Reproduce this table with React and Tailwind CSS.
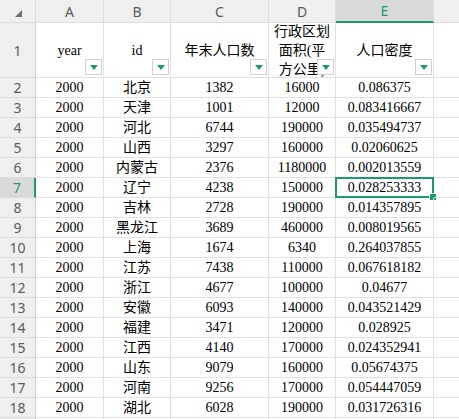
import React from 'react';

const rows = [
  ['2000', '北京', '1382', '16000', '0.086375'],
  ['2000', '天津', '1001', '12000', '0.083416667'],
  ['2000', '河北', '6744', '190000', '0.035494737'],
  ['2000', '山西', '3297', '160000', '0.02060625'],
  ['2000', '内蒙古', '2376', '1180000', '0.002013559'],
  ['2000', '辽宁', '4238', '150000', '0.028253333'],
  ['2000', '吉林', '2728', '190000', '0.014357895'],
  ['2000', '黑龙江', '3689', '460000', '0.008019565'],
  ['2000', '上海', '1674', '6340', '0.264037855'],
  ['2000', '江苏', '7438', '110000', '0.067618182'],
  ['2000', '浙江', '4677', '100000', '0.04677'],
  ['2000', '安徽', '6093', '140000', '0.043521429'],
  ['2000', '福建', '3471', '120000', '0.028925'],
  ['2000', '江西', '4140', '170000', '0.024352941'],
  ['2000', '山东', '9079', '160000', '0.05674375'],
  ['2000', '河南', '9256', '170000', '0.054447059'],
  ['2000', '湖北', '6028', '190000', '0.031726316'],
];

const cellFont = { fontFamily: '"Liberation Serif", "Noto Sans CJK SC", serif' };
const uiFont = { fontFamily: '"Noto Sans", "Liberation Sans", sans-serif' };

// little filter dropdown in header cells
function FilterBtn() {
  return (
    <div className="absolute right-[1px] bottom-[2px] w-[17px] h-[16px] border border-[#d0d0d0] bg-white flex items-center justify-center">
      <div className="w-0 h-0 border-l-[4px] border-r-[4px] border-t-[5px] border-l-transparent border-r-transparent border-t-[#1b9b6b] mt-[1px]" />
    </div>
  );
}

function ColHead({ label, active }) {
  return (
    <div
      className={
        'flex items-center justify-center border-r border-[#dcdcdc] text-[14px] ' +
        (active ? 'bg-[#d9d9d9] text-[#1b9b6b] border-b-2 border-b-[#1b9b6b]' : 'bg-[#efefef] text-[#5a5a5a] border-b border-b-[#dcdcdc]')
      }
      style={uiFont}
    >
      {label}
    </div>
  );
}

function RowHead({ n, active }) {
  return (
    <div
      className={
        'flex items-center justify-center border-b border-[#dcdcdc] text-[14px] ' +
        (active ? 'bg-[#d9d9d9] text-[#1b9b6b] border-r-2 border-r-[#1b9b6b]' : 'bg-[#efefef] text-[#5a5a5a] border-r border-r-[#d0d0d0]')
      }
      style={uiFont}
    >
      {n}
    </div>
  );
}

function Cell({ children, selected }) {
  return (
    <div
      className="relative flex items-center justify-center border-r border-b border-[#e1e1e1] text-[14px] text-black whitespace-nowrap"
      style={cellFont}
    >
      {children}
      {selected && (
        <div className="absolute -left-[1px] -top-[1px] -right-[1px] -bottom-[1px] border-2 border-[#1b9b6b]">
          <div className="absolute -right-[4px] -bottom-[4px] w-[6px] h-[6px] bg-[#1b9b6b] outline outline-1 outline-white" />
        </div>
      )}
    </div>
  );
}

function HeadCell({ children, wrap }) {
  return (
    <div
      className="relative flex items-center justify-center border-r border-b border-[#e1e1e1] text-[14px] text-black overflow-hidden bg-white"
      style={cellFont}
    >
      <div className={wrap ? 'px-[4px] text-center leading-[19px] break-all' : 'whitespace-nowrap'}>{children}</div>
      <FilterBtn />
    </div>
  );
}

export default function App() {
  return (
    <div className="w-[459px] h-[419px] overflow-hidden bg-white">
      <div className="grid grid-cols-[36px_68px_67px_98px_67px_98px_60px] grid-rows-[23px_55px_repeat(18,20px)] w-[494px]">
        {/* column headers */}
        <div className="relative bg-[#efefef] border-r border-b border-[#dcdcdc]">
          <svg className="absolute left-[15px] top-[10px]" width="7" height="7" viewBox="0 0 7 7">
            <polygon points="7,0 7,7 0,7" fill="#6e6e6e" />
          </svg>
        </div>
        <ColHead label="A" />
        <ColHead label="B" />
        <ColHead label="C" />
        <ColHead label="D" />
        <ColHead label="E" active />
        <ColHead label="" />

        {/* header row */}
        <RowHead n={1} />
        <HeadCell>year</HeadCell>
        <HeadCell>id</HeadCell>
        <HeadCell>年末人口数</HeadCell>
        <HeadCell wrap>行政区划面积(平方公里)</HeadCell>
        <HeadCell>人口密度</HeadCell>
        <Cell />

        {rows.map((r, i) => (
          <React.Fragment key={i}>
            <RowHead n={i + 2} active={i + 2 === 7} />
            {r.map((v, j) => (
              <Cell key={j} selected={i + 2 === 7 && j === 4}>{v}</Cell>
            ))}
            <Cell />
          </React.Fragment>
        ))}

        {/* sliver of row 19 at the bottom edge */}
        <RowHead n="" />
        <Cell />
        <Cell />
        <Cell />
        <Cell />
        <Cell />
        <Cell />
      </div>
    </div>
  );
}
